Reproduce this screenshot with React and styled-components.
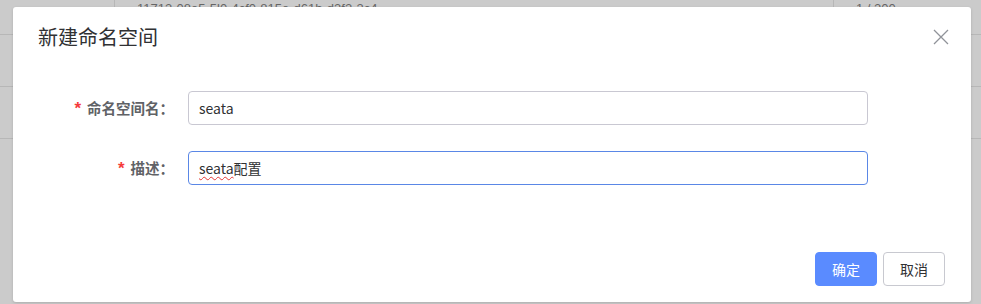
import React from "react";
import styled, { createGlobalStyle } from "styled-components";

const GlobalStyle = createGlobalStyle`
  html, body {
    margin: 0;
    padding: 0;
    width: 981px;
    height: 304px;
    overflow: hidden;
    font-family: "Noto Sans CJK SC", "Liberation Sans", sans-serif;
  }
`;

const Page = styled.div`
  position: relative;
  width: 981px;
  height: 304px;
  background: #cbcbcb;
  overflow: hidden;
`;

const Table = styled.div`
  margin-top: -17px;
`;

const Row = styled.div`
  display: grid;
  grid-template-columns: 114px 719px 1fr;
  height: 51px;
  border-bottom: 1px solid #b7b7b7;
  color: #666;
  font-size: 13px;
  font-family: "Liberation Sans", sans-serif;

  & > div {
    display: flex;
    align-items: center;
    padding-left: 22px;
  }
  & > div + div {
    border-left: 1px solid #b7b7b7;
  }
`;

const Dialog = styled.div`
  position: absolute;
  left: 13px;
  top: 7px;
  width: 958px;
  height: 295px;
  background: #fff;
  border-radius: 3px;
  box-shadow: 0 1px 3px rgba(0, 0, 0, 0.15);
  box-sizing: border-box;
  display: flex;
  flex-direction: column;
`;

const Header = styled.div`
  display: flex;
  align-items: center;
  justify-content: space-between;
  padding: 18px 22px 0 25px;
  height: 24px;
`;

const Title = styled.span`
  font-size: 20px;
  line-height: 24px;
  color: #303133;
`;

const Close = styled.button`
  border: none;
  background: none;
  padding: 0;
  width: 16px;
  height: 16px;
  display: flex;
  cursor: pointer;
`;

const Form = styled.div`
  display: flex;
  flex-direction: column;
  gap: 26px;
  padding: 42px 0 0 20px;
`;

const Field = styled.div`
  display: flex;
  align-items: center;
`;

const Label = styled.label`
  width: 155px;
  box-sizing: border-box;
  padding-right: 14px;
  text-align: right;
  font-size: 14.5px;
  font-weight: 700;
  color: #606266;

  &::before {
    content: "*";
    color: #f53b3b;
    margin-right: 6px;
    font-size: 17px;
    font-weight: 700;
    font-family: "Liberation Sans", sans-serif;
  }
`;

const Input = styled.div`
  width: 680px;
  height: 34px;
  box-sizing: border-box;
  border: 1px solid ${(p) => (p.$focused ? "#5a87e6" : "#c9c8d2")};
  border-radius: 4px;
  padding: 0 10px;
  display: flex;
  align-items: center;
  font-size: 14px;
  color: #303133;
`;

const Misspelled = styled.span`
  text-decoration: underline wavy #e53935;
  text-decoration-thickness: 1px;
  text-underline-offset: 2px;
`;

const Footer = styled.div`
  margin-top: auto;
  display: flex;
  justify-content: flex-end;
  gap: 6px;
  padding: 0 26px 16px 0;
`;

const Button = styled.button`
  width: 62px;
  height: 34px;
  border-radius: 4px;
  font-family: inherit;
  font-size: 14px;
  border: 1px solid ${(p) => (p.$primary ? "#5a8bff" : "#c8c9d0")};
  background: ${(p) => (p.$primary ? "#5a8bff" : "#fff")};
  color: ${(p) => (p.$primary ? "#fff" : "#303133")};
  cursor: pointer;
`;

const App = () => {
  return (
    <Page>
      <GlobalStyle />
      <Table>
        <Row>
          <div />
          <div>11713-08e5-5l0-4cf0-815e-d61b-d3f2-3c4</div>
          <div>1 / 200</div>
        </Row>
        <Row>
          <div />
          <div />
          <div />
        </Row>
        <Row>
          <div />
          <div />
          <div />
        </Row>
      </Table>
      <Dialog>
        <Header>
          <Title>新建命名空间</Title>
          <Close aria-label="close">
            <svg width="16" height="16" viewBox="0 0 16 16">
              <path d="M1 1L15 15M15 1L1 15" stroke="#909399" strokeWidth="1.3" fill="none" />
            </svg>
          </Close>
        </Header>
        <Form>
          <Field>
            <Label>命名空间名：</Label>
            <Input>seata</Input>
          </Field>
          <Field>
            <Label>描述：</Label>
            <Input $focused>
              <Misspelled>seata</Misspelled>配置
            </Input>
          </Field>
        </Form>
        <Footer>
          <Button $primary>确定</Button>
          <Button>取消</Button>
        </Footer>
      </Dialog>
    </Page>
  );
};

export default App;
